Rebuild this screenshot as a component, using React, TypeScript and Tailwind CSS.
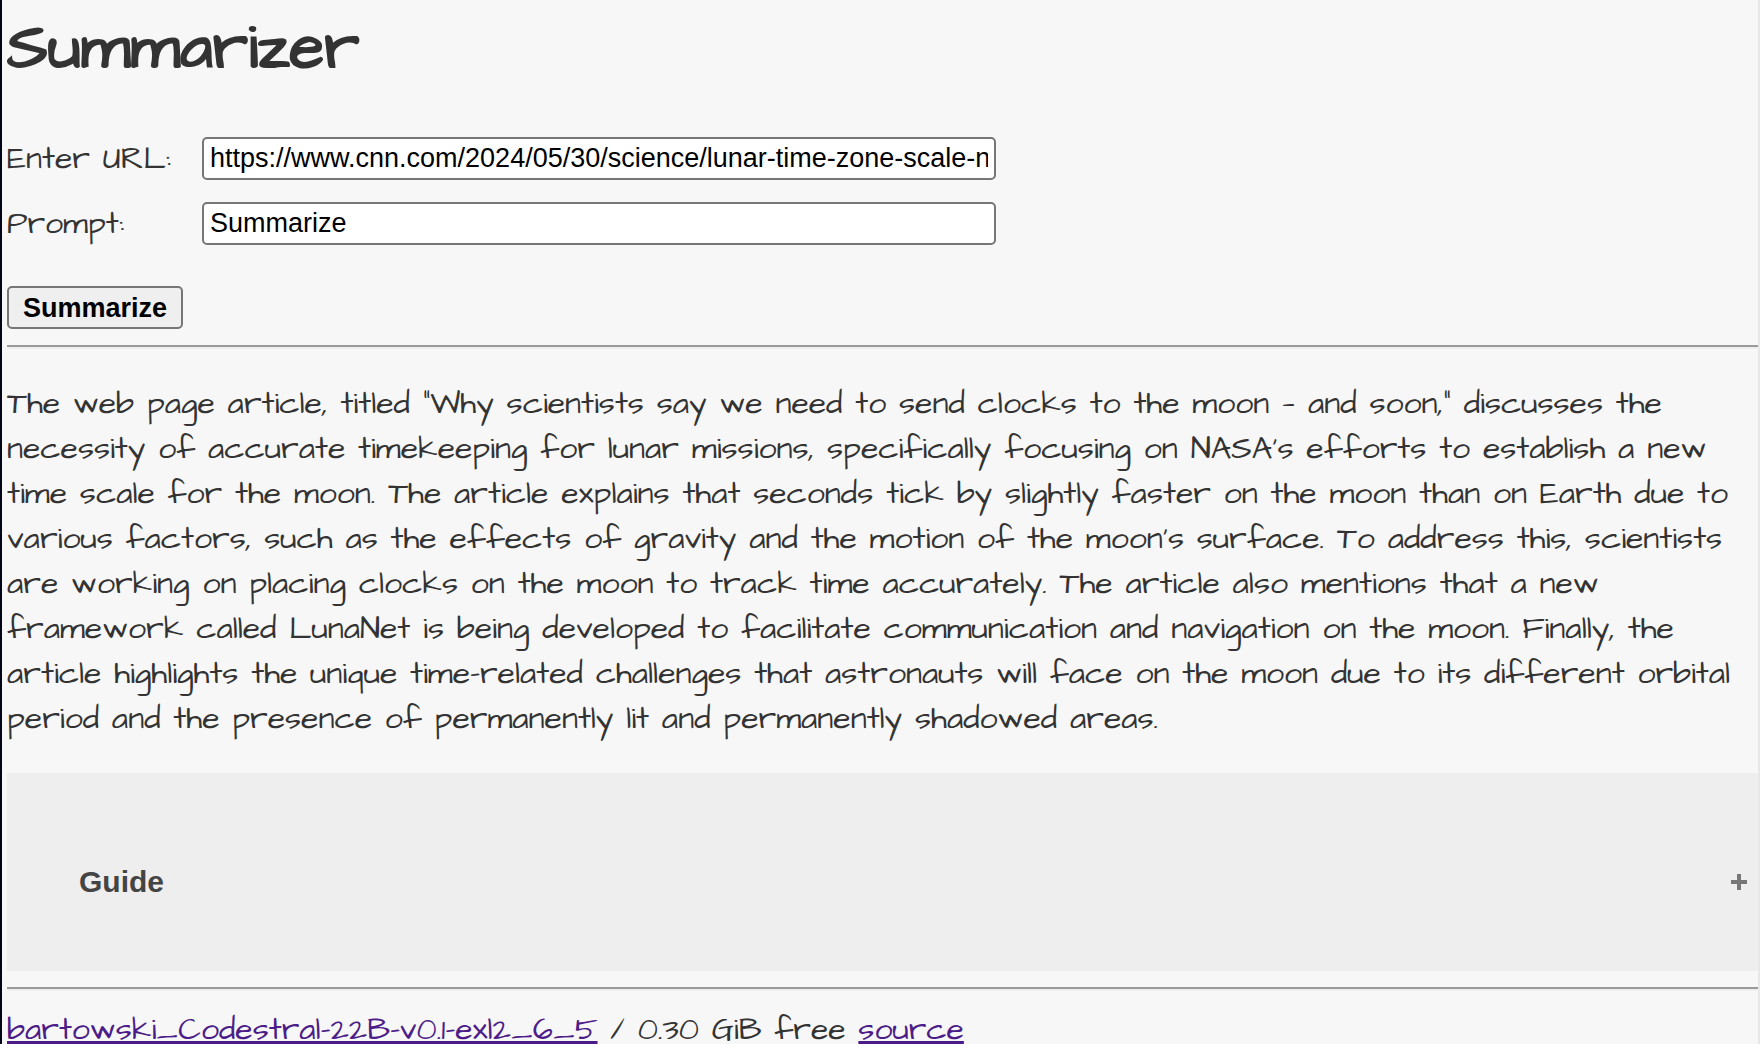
import { useState } from "react";

const summary =
  "The web page article, titled \"Why scientists say we need to send clocks to the moon — and soon,\" discusses the necessity of accurate timekeeping for lunar missions, specifically focusing on NASA's efforts to establish a new time scale for the moon. The article explains that seconds tick by slightly faster on the moon than on Earth due to various factors, such as the effects of gravity and the motion of the moon's surface. To address this, scientists are working on placing clocks on the moon to track time accurately. The article also mentions that a new framework called LunaNet is being developed to facilitate communication and navigation on the moon. Finally, the article highlights the unique time-related challenges that astronauts will face on the moon due to its different orbital period and the presence of permanently lit and permanently shadowed areas.";

const fieldClass =
  "h-[43px] w-[794px] rounded-[5px] border-2 border-[#767676] bg-white px-1.5 font-['Liberation_Sans',Arial,sans-serif] text-[27px] leading-8 text-black";

const linkClass =
  "text-[#4c1d88] underline decoration-[3px] underline-offset-2 [text-decoration-skip-ink:none]";

function Divider() {
  return <hr className="h-1 border-0 border-t-2 border-t-[#9a9a9a] bg-[#eeeeee]" />;
}

export default function App() {
  const [url, setUrl] = useState(
    "https://www.cnn.com/2024/05/30/science/lunar-time-zone-scale-nasa-scn/index.html",
  );
  const [prompt, setPrompt] = useState("Summarize");

  return (
    <div className="min-h-screen border-r-2 border-l-2 border-l-[#020617] border-r-[#e7e7e7] bg-[#f7f7f7] pl-[5px] font-['Architects_Daughter','Open_Sans',sans-serif] text-[32px] leading-[45px] text-[#333333]">
      <h1 className="pt-2 text-[64px] leading-[82px] font-bold">Summarizer</h1>

      <form className="mt-[46px]" onSubmit={(e) => e.preventDefault()}>
        <div className="grid grid-cols-[195px_auto] items-center justify-start gap-y-5">
          <label htmlFor="url">Enter URL:</label>
          <input id="url" type="text" className={fieldClass} value={url} onChange={(e) => setUrl(e.target.value)} />
          <label htmlFor="prompt">Prompt:</label>
          <input id="prompt" type="text" className={fieldClass} value={prompt} onChange={(e) => setPrompt(e.target.value)} />
        </div>
        <button
          type="submit"
          className="mt-10 mb-4 block h-[43px] rounded-[5px] border-2 border-[#767676] bg-[#efefef] px-3.5 font-['Liberation_Sans',Arial,sans-serif] text-[27px] leading-8 font-bold text-black"
        >
          Summarize
        </button>
      </form>

      <Divider />

      <p className="mt-8 mb-8">{summary}</p>

      <button
        type="button"
        aria-expanded="false"
        className="mb-4 flex h-[198px] w-full items-center justify-between bg-[#eeeeee] pt-5 pr-[11px] pl-18 text-left font-['Liberation_Sans',Arial,sans-serif] text-[30px] leading-9 font-bold text-[#444444]"
      >
        <span>Guide</span>
        <svg aria-hidden="true" viewBox="0 0 16 16" className="size-4 fill-[#777777]">
          <path d="M6 0h4v6h6v4h-6v6h-4v-6h-6v-4h6z" />
        </svg>
      </button>

      <Divider />

      <footer className="pt-4">
        <a href="#model" className={linkClass}>bartowski_Codestral-22B-v0.1-exl2_6_5</a>
        {" / 0.30 GiB free "}
        <a href="#source" className={linkClass}>source</a>
      </footer>
    </div>
  );
}
